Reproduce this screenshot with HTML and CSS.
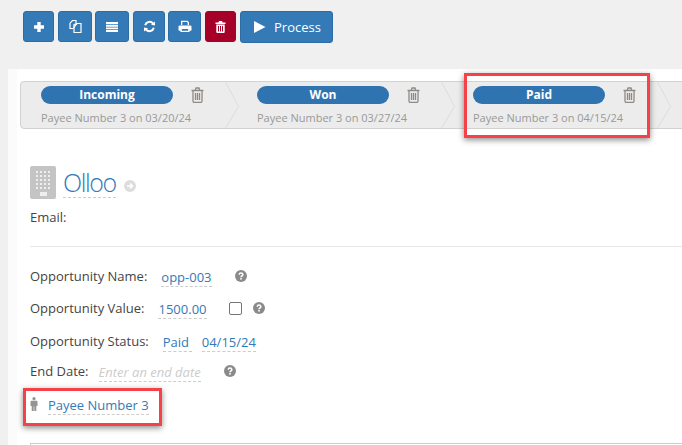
FILE: index.html
```html
<!DOCTYPE html>
<html lang="en">
<head>
<meta charset="utf-8">
<title>Opportunity</title>
<link rel="stylesheet" href="styles.css">
</head>
<body>
<div class="toolbar">
  <button class="btn w31"><svg width="12" height="12" viewBox="0 0 12 12"><path class="fill" d="M4.300 1h3.400v3.300H11v3.400H7.700V11H4.300V7.700H1V4.300h3.300z"/></svg></button>
  <button class="btn w34 m4"><svg width="15" height="15" viewBox="0 0 15 15"><path class="line" d="M5.500 9.500H2V4.200L4.500 1.500H8V4.500"/><path class="line" d="M6 5.500L9 4.500H13V13.500H6z"/><path class="line" d="M9 4.500L6 8V9"/></svg></button>
  <button class="btn w34 m3"><svg width="14" height="12" viewBox="0 0 14 12"><path class="fill" d="M1 1h12v2.200H1zM1 4h12v1.700H1zM1 6.500h12v1.700H1zM1 9h12v2H1z"/></svg></button>
  <button class="btn w32 m4"><svg width="13" height="13" viewBox="0 0 13 13"><path class="thick" d="M2.200 5.200A4.500 4.500 0 0 1 10 3.500"/><path class="fill" d="M8 4.800L12 5.500V1.500z"/><path class="thick" d="M10.800 7.800A4.500 4.500 0 0 1 3 9.500"/><path class="fill" d="M5 8.200L1 7.500V11.500z"/></svg></button>
  <button class="btn w33 m3"><svg width="14" height="13" viewBox="0 0 14 13"><path class="fill" d="M3 .8h6.500L11 2.300V5H9.700V2.800L9 2.100H4.300V5H3zM1.800 5.500h10.400q1.300 0 1.300 1.300V10q0 .8-.8.800H11.500V12H2.500v-1.200H1.300Q.5 10.800.5 10V6.800q0-1.300 1.300-1.300zM3.800 9v1.800h6.400V9z"/></svg></button>
  <button class="btn danger w31 m4"><svg width="11" height="12" viewBox="0 0 11 12"><path class="fill" d="M4 0h3l.6 1.500H10.500V3H.5V1.500H3.400zM1.300 3.500h8.400V11q0 1-1 1H2.300q-1 0-1-1zM3 5v5.500h1V5zM5 5v5.500h1V5zM7 5v5.500h1V5z"/></svg></button>
  <button class="btn process m4"><svg width="13" height="14" viewBox="0 0 13 14"><path class="fill" d="M1 1l11.500 6L1 13z"/></svg><span>Process</span></button>
</div>
<main class="card">
  <div class="inner">
    <div class="stages">
      <div class="stage">
        <div class="stage-top"><span class="pill">Incoming</span><svg class="bin" width="13" height="16" viewBox="0 0 13 16"><path class="binline" d="M.5 3.500h12M2 3.500V14q0 1.500 1.500 1.500h6Q11 15.500 11 14V3.500M4.300 3.300L5 1h3l.7 2.300M4.500 6v7M6.500 6v7M8.500 6v7"/></svg></div>
        <div class="stage-by">Payee Number 3 on 03/20/24</div>
        <svg class="chevron" width="15" height="46" viewBox="0 0 15 46"><path d="M.5 0L13.500 24.500.5 46" fill="none" stroke="#dcdcdc"/></svg>
      </div>
      <div class="stage">
        <div class="stage-top"><span class="pill">Won</span><svg class="bin" width="13" height="16" viewBox="0 0 13 16"><path class="binline" d="M.5 3.500h12M2 3.500V14q0 1.500 1.500 1.500h6Q11 15.500 11 14V3.500M4.300 3.300L5 1h3l.7 2.300M4.500 6v7M6.500 6v7M8.500 6v7"/></svg></div>
        <div class="stage-by">Payee Number 3 on 03/27/24</div>
        <svg class="chevron" width="15" height="46" viewBox="0 0 15 46"><path d="M.5 0L13.500 24.500.5 46" fill="none" stroke="#dcdcdc"/></svg>
      </div>
      <div class="stage">
        <div class="stage-top"><span class="pill">Paid</span><svg class="bin" width="13" height="16" viewBox="0 0 13 16"><path class="binline" d="M.5 3.500h12M2 3.500V14q0 1.500 1.500 1.500h6Q11 15.500 11 14V3.500M4.300 3.300L5 1h3l.7 2.300M4.500 6v7M6.500 6v7M8.500 6v7"/></svg></div>
        <div class="stage-by">Payee Number 3 on 04/15/24</div>
        <svg class="chevron" width="15" height="46" viewBox="0 0 15 46"><path d="M.5 0L13.500 24.500.5 46" fill="none" stroke="#dcdcdc"/></svg>
      </div>
    </div>

    <div class="company">
      <svg class="building" width="26" height="33" viewBox="0 0 26 33">
        <rect width="26" height="33" rx="2" fill="#c4c4c4"/>
        <path fill="#eee" d="M6 5h2v2H6zM10 5h2v2h-2zM14 5h2v2h-2zM18 5h2v2h-2zM6 9h2v2H6zM10 9h2v2h-2zM14 9h2v2h-2zM18 9h2v2h-2zM6 13h2v2H6zM10 13h2v2h-2zM14 13h2v2h-2zM18 13h2v2h-2zM6 17h2v2H6zM10 17h2v2h-2zM14 17h2v2h-2zM18 17h2v2h-2zM6 21h2v2H6zM10 21h2v2h-2zM14 21h2v2h-2zM18 21h2v2h-2zM10 26h7v4h-7z"/>
      </svg>
      <span class="name">Olloo</span>
      <svg class="goto" width="12" height="12" viewBox="0 0 12 12"><circle cx="6" cy="6" r="6" fill="#ddd"/><path d="M3 6h5M6 3.500L8.500 6 6 8.500" fill="none" stroke="#fff" stroke-width="1.500"/></svg>
    </div>
    <div class="email">Email:</div>
    <hr class="rule">

    <div class="field f-name">
      <span class="label">Opportunity Name:</span>
      <span class="edit e-name">opp-003</span>
      <svg class="help h-name" width="12" height="12" viewBox="0 0 12 12"><circle cx="6" cy="6" r="6" fill="#8a8a8a"/><path d="M4.200 4.700Q4.300 3 6 3t1.900 1.500Q7.900 5.500 6.900 6 6 6.500 6 7.300" fill="none" stroke="#fff" stroke-width="1.500"/><rect x="5.200" y="8" width="1.600" height="1.600" fill="#fff"/></svg>
    </div>
    <div class="field f-value">
      <span class="label">Opportunity Value:</span>
      <span class="edit e-value">1500.00</span>
      <span class="check"></span>
      <svg class="help h-value" width="12" height="12" viewBox="0 0 12 12"><circle cx="6" cy="6" r="6" fill="#8a8a8a"/><path d="M4.200 4.700Q4.300 3 6 3t1.900 1.500Q7.900 5.500 6.900 6 6 6.500 6 7.300" fill="none" stroke="#fff" stroke-width="1.500"/><rect x="5.200" y="8" width="1.600" height="1.600" fill="#fff"/></svg>
    </div>
    <div class="field f-status">
      <span class="label">Opportunity Status:</span>
      <span class="edit e-status">Paid</span>
      <span class="edit e-date">04/15/24</span>
    </div>
    <div class="field f-end">
      <span class="label">End Date:</span>
      <span class="edit empty">Enter an end date</span>
      <svg class="help h-end" width="12" height="12" viewBox="0 0 12 12"><circle cx="6" cy="6" r="6" fill="#8a8a8a"/><path d="M4.200 4.700Q4.300 3 6 3t1.900 1.500Q7.900 5.500 6.900 6 6 6.500 6 7.300" fill="none" stroke="#fff" stroke-width="1.500"/><rect x="5.200" y="8" width="1.600" height="1.600" fill="#fff"/></svg>
    </div>
    <div class="field f-person">
      <svg class="person" width="8" height="14" viewBox="0 0 8 14"><circle cx="4" cy="1.700" r="1.600" fill="#949494"/><path fill="#949494" d="M1.500 3.800h5q1 0 1 1V9H6.300v5H4.300V9.500h-.6V14H1.700V9H.5V4.800q0-1 1-1z"/></svg>
      <span class="edit">Payee Number 3</span>
    </div>
    <div class="box"></div>
  </div>
</main>
<div class="mark mark-stage"></div>
<div class="mark mark-person"></div>
</body>
</html>
```

FILE: styles.css
```css
* { box-sizing: border-box; }
html, body { height: 100%; }
body {
  margin: 0;
  width: 682px;
  height: 445px;
  overflow: hidden;
  position: relative;
  background: #f0f0f0;
  font-family: "Open Sans", sans-serif;
  font-size: 13px;
  color: #444;
}
.toolbar { display: flex; align-items: flex-start; padding: 11px 0 0 23px; height: 69px; }
.btn {
  display: flex;
  align-items: center;
  justify-content: center;
  height: 31px;
  padding: 0;
  border: 1px solid #2e6da4;
  border-radius: 3px;
  background: #337ab7;
  color: #fff;
  font: inherit;
}
.w31 { width: 31px; }
.w32 { width: 32px; }
.w33 { width: 33px; }
.w34 { width: 34px; }
.m3 { margin-left: 3px; }
.m4 { margin-left: 4px; }
.danger { background: #a60029; border-color: #a60029; }
.process { width: 93px; height: 32px; gap: 8px; justify-content: flex-start; padding-left: 12px; font-size: 13px; }
.fill { fill: #fff; }
.line { fill: none; stroke: #fff; stroke-width: 1.200; }
.thick { fill: none; stroke: #fff; stroke-width: 2; }
.card { margin-left: 8px; height: 376px; background: #fbfbfb; padding-left: 9px; }
.inner { background: #fff; height: 100%; padding: 12px 0 0 3px; overflow: hidden; }
.stages {
  display: flex;
  width: 680px;
  height: 48px;
  border: 1px solid #d2d2d2;
  border-radius: 4px;
  background: #ececec;
}
.stage { width: 216px; padding: 4px 0 0 20px; position: relative; flex: none; }
.chevron { position: absolute; left: 204px; top: 0; }
.stage-top { display: flex; align-items: center; height: 18px; }
.pill {
  width: 132px;
  height: 18px;
  border-radius: 9px;
  background: #2f74b1;
  color: #fff;
  font-weight: 700;
  font-size: 12px;
  line-height: 18px;
  text-align: center;
}
.bin { margin-left: 18px; }
.binline { fill: none; stroke: #8f8a85; stroke-width: 1.300; }
.stage-by { margin-top: 6px; font-size: 11px; line-height: 16px; color: #999; white-space: nowrap; }
.company { display: flex; align-items: flex-start; margin: 37px 0 0 10px; height: 33px; }
.name {
  margin-left: 7px;
  font-size: 25px;
  font-weight: 300;
  letter-spacing: -1.400px;
  line-height: 32px;
  height: 32px;
  color: #337ab7;
  border-bottom: 1px dashed #ccc;
}
.goto { margin: 14px 0 0 8px; }
.email { margin: 9px 0 0 10px; line-height: 18px; }
.rule { margin: 20px 0 0 10px; border: 0; border-top: 1px solid #e8e8e8; }
.field { display: flex; align-items: center; margin-left: 10px; height: 20px; white-space: nowrap; }
.f-name { margin-top: 19px; }
.f-value { margin-top: 12px; }
.f-status { margin-top: 13px; }
.f-end { margin-top: 10px; }
.f-person { margin-top: 13px; }
.edit { color: #337ab7; border-bottom: 1px dashed #ccc; line-height: 17px; height: 18px; margin-top: 3px; }
.e-name { margin-left: 14px; }
.h-name { margin-left: 23px; }
.e-value { margin-left: 14px; }
.check { width: 13px; height: 13px; margin-left: 22px; border: 1px solid #767676; border-radius: 2px; background: #fff; }
.h-value { margin-left: 11px; }
.e-status { margin-left: 14px; width: 29px; }
.e-date { margin-left: 10px; }
.empty { margin-left: 10px; color: #ccc; font-style: italic; }
.h-end { margin-left: 23px; }
.person { margin-right: 10px; }
.box { margin: 29px 0 0 10px; height: 20px; border: 1px solid #ccc; border-right: 0; }
.mark { position: absolute; border: 3px solid #f44248; box-shadow: 0 2px 6px rgba(0, 0, 0, .45); }
.mark-stage { left: 464px; top: 73px; width: 186px; height: 65px; }
.mark-person { left: 23px; top: 388px; width: 139px; height: 38px; }
```
